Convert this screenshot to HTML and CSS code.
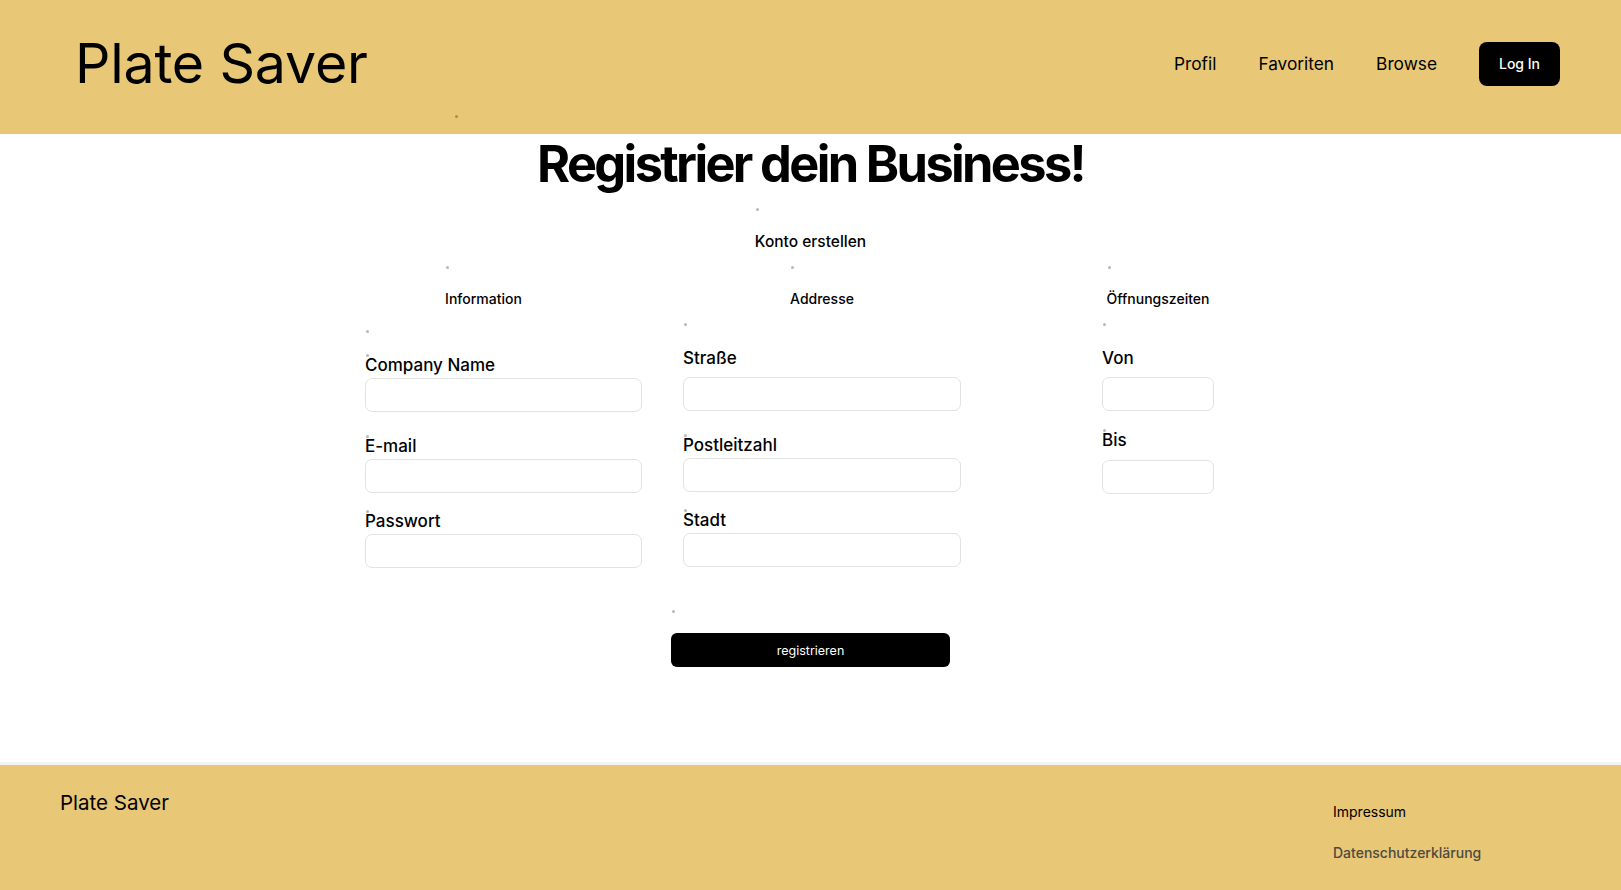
FILE: index.html
```html
<!DOCTYPE html>
<html lang="de">
<head>
<meta charset="utf-8">
<title>Plate Saver – Registrier dein Business</title>
<link rel="stylesheet" href="styles.css">
</head>
<body>
<header class="site-header">
  <div class="logo mark mark-logo">Plate Saver</div>
  <nav class="nav">
    <a class="nav-link" href="#">Profil</a>
    <a class="nav-link" href="#">Favoriten</a>
    <a class="nav-link" href="#">Browse</a>
    <a class="login-btn" href="#">Log In</a>
  </nav>
</header>

<main class="main">
  <h1 class="title">Registrier dein Business!</h1>
  <div class="subtitle-row"><h2 class="subtitle mark mark-sub">Konto erstellen</h2></div>

  <form class="cols">
    <section class="col col-info">
      <div class="col-head head-info"><h3 class="col-title mark mark-head">Information</h3></div>
      <div class="fields fields-info mark mark-fields">
        <div class="field mark mark-field">
          <label class="label">Company Name</label>
          <input class="input" type="text">
        </div>
        <div class="field mark mark-field">
          <label class="label">E-mail</label>
          <input class="input" type="email">
        </div>
        <div class="field mark mark-field">
          <label class="label">Passwort</label>
          <input class="input" type="password">
        </div>
      </div>
    </section>

    <section class="col col-addr">
      <div class="col-head"><h3 class="col-title mark mark-head">Addresse</h3></div>
      <div class="fields fields-addr mark mark-fields">
        <div class="field">
          <label class="label">Straße</label>
          <input class="input" type="text">
        </div>
        <div class="field mark mark-field">
          <label class="label">Postleitzahl</label>
          <input class="input" type="text">
        </div>
        <div class="field mark mark-field">
          <label class="label">Stadt</label>
          <input class="input" type="text">
        </div>
      </div>
    </section>

    <section class="col col-time">
      <div class="col-head"><h3 class="col-title mark mark-head">Öffnungszeiten</h3></div>
      <div class="fields fields-time mark mark-fields">
        <div class="field">
          <label class="label">Von</label>
          <input class="input" type="text">
        </div>
        <div class="field mark mark-field">
          <label class="label">Bis</label>
          <input class="input" type="text">
        </div>
      </div>
    </section>
  </form>

  <div class="submit-row"><button class="submit mark mark-btn" type="button">registrieren</button></div>
</main>

<footer class="site-footer">
  <div class="footer-logo">Plate Saver</div>
  <div class="footer-links">
    <a class="footer-link" href="#">Impressum</a>
    <a class="footer-link muted" href="#">Datenschutzerklärung</a>
  </div>
</footer>
</body>
</html>
```

FILE: styles.css
```css
* { box-sizing: border-box; }

html, body {
  margin: 0;
  padding: 0;
}

body {
  font-family: Inter, "Noto Sans", "Liberation Sans", sans-serif;
  color: #000;
  background: #fff;
  width: 1621px;
  height: 890px;
  overflow: hidden;
}

a { color: inherit; text-decoration: none; }

/* tiny grey markers seen in the reference */
.mark { position: relative; }
.mark::before {
  content: "";
  position: absolute;
  width: 3px;
  height: 3px;
  border-radius: 50%;
  background: #b8b8b8;
  left: 1px;
}
.mark-logo::before { left: 380px; top: 82px; background: #a08e60; }
.mark-sub::before { top: -24px; }
.mark-head::before { top: -23px; }
.mark-fields::before { top: -25px; left: 1px; }
.mark-field::before { top: -1px; left: 1px; }
.mark-btn::before { top: -23px; left: 1px; }

/* header */
.site-header {
  height: 134px;
  background: #e8c776;
  display: flex;
  align-items: center;
  justify-content: space-between;
  padding: 0 61px 0 75px;
}

.logo {
  font-size: 55.5px;
  line-height: 60px;
  font-weight: 400;
  letter-spacing: -0.2px;
  margin-top: -8px;
}

.nav {
  display: flex;
  align-items: center;
  gap: 42px;
  margin-top: -7px;
}

.nav-link {
  font-size: 17.3px;
  line-height: 22px;
  font-weight: 400;
}

.login-btn {
  display: flex;
  align-items: center;
  justify-content: center;
  width: 81px;
  height: 44px;
  background: #000;
  color: #fff;
  border-radius: 8px;
  font-size: 14px;
  font-weight: 500;
}

/* main */
.main {
  height: 628px;
  display: flex;
  flex-direction: column;
  align-items: center;
}

.title {
  margin: 1px 0 0;
  font-size: 50.5px;
  line-height: 58px;
  font-weight: 700;
  letter-spacing: -2.65px;
}

.subtitle-row {
  margin-top: 39px;
  display: flex;
  justify-content: center;
}

.subtitle {
  margin: 0;
  font-size: 15.5px;
  line-height: 20px;
  font-weight: 500;
}

.cols {
  margin-top: 37px;
  display: flex;
  align-self: stretch;
  justify-content: center;
  padding-right: 42px;
}

.col-info { width: 277px; }
.col-addr { width: 278px; margin-left: 41px; }
.col-time { width: 112px; margin-left: 141px; }

.col-head {
  display: flex;
  justify-content: center;
  height: 20px;
}
.head-info { padding-right: 40px; }
.col-time .col-head { margin: 0 -40px; }

.col-title {
  margin: 0;
  font-size: 14px;
  line-height: 20px;
  font-weight: 500;
}

.fields {
  display: flex;
  flex-direction: column;
}
.fields-info { margin-top: 46px; }
.fields-addr, .fields-time { margin-top: 39px; }

.field {
  display: flex;
  flex-direction: column;
}
.field:nth-child(2) { margin-top: 24px; }
.field:nth-child(3) { margin-top: 18px; }
.fields-time .field:nth-child(2) { margin-top: 19px; }

.label {
  font-size: 17px;
  line-height: 20px;
  font-weight: 500;
  margin-bottom: 3px;
}
.fields-addr .field:first-child .label,
.fields-time .field:first-child .label { margin-bottom: 9px; }
.fields-time .field:nth-child(2) .label { margin-bottom: 10px; }

.input {
  width: 100%;
  height: 34px;
  border: 1px solid #e2e2e2;
  border-radius: 7px;
  background: #fff;
  font: inherit;
  padding: 0 10px;
}

.submit-row {
  margin-top: 65px;
  display: flex;
  justify-content: center;
}

.submit {
  width: 279px;
  height: 34px;
  border: none;
  border-radius: 6px;
  background: #000;
  color: #fff;
  font-family: inherit;
  font-size: 12.5px;
  font-weight: 400;
}

/* footer */
.site-footer {
  height: 128px;
  border-top: 3px solid #f3f2f5;
  background: #e8c776;
  display: flex;
  justify-content: space-between;
  align-items: flex-start;
  padding: 26px 142px 0 60px;
}

.footer-logo {
  font-size: 20.5px;
  line-height: 24px;
  font-weight: 400;
}

.footer-links {
  display: flex;
  flex-direction: column;
  gap: 21px;
  padding-top: 11px;
  width: 146px;
}

.footer-link {
  font-size: 14px;
  line-height: 20px;
  font-weight: 400;
}

.footer-link.muted { color: #4e4a40; font-weight: 500; }
```
